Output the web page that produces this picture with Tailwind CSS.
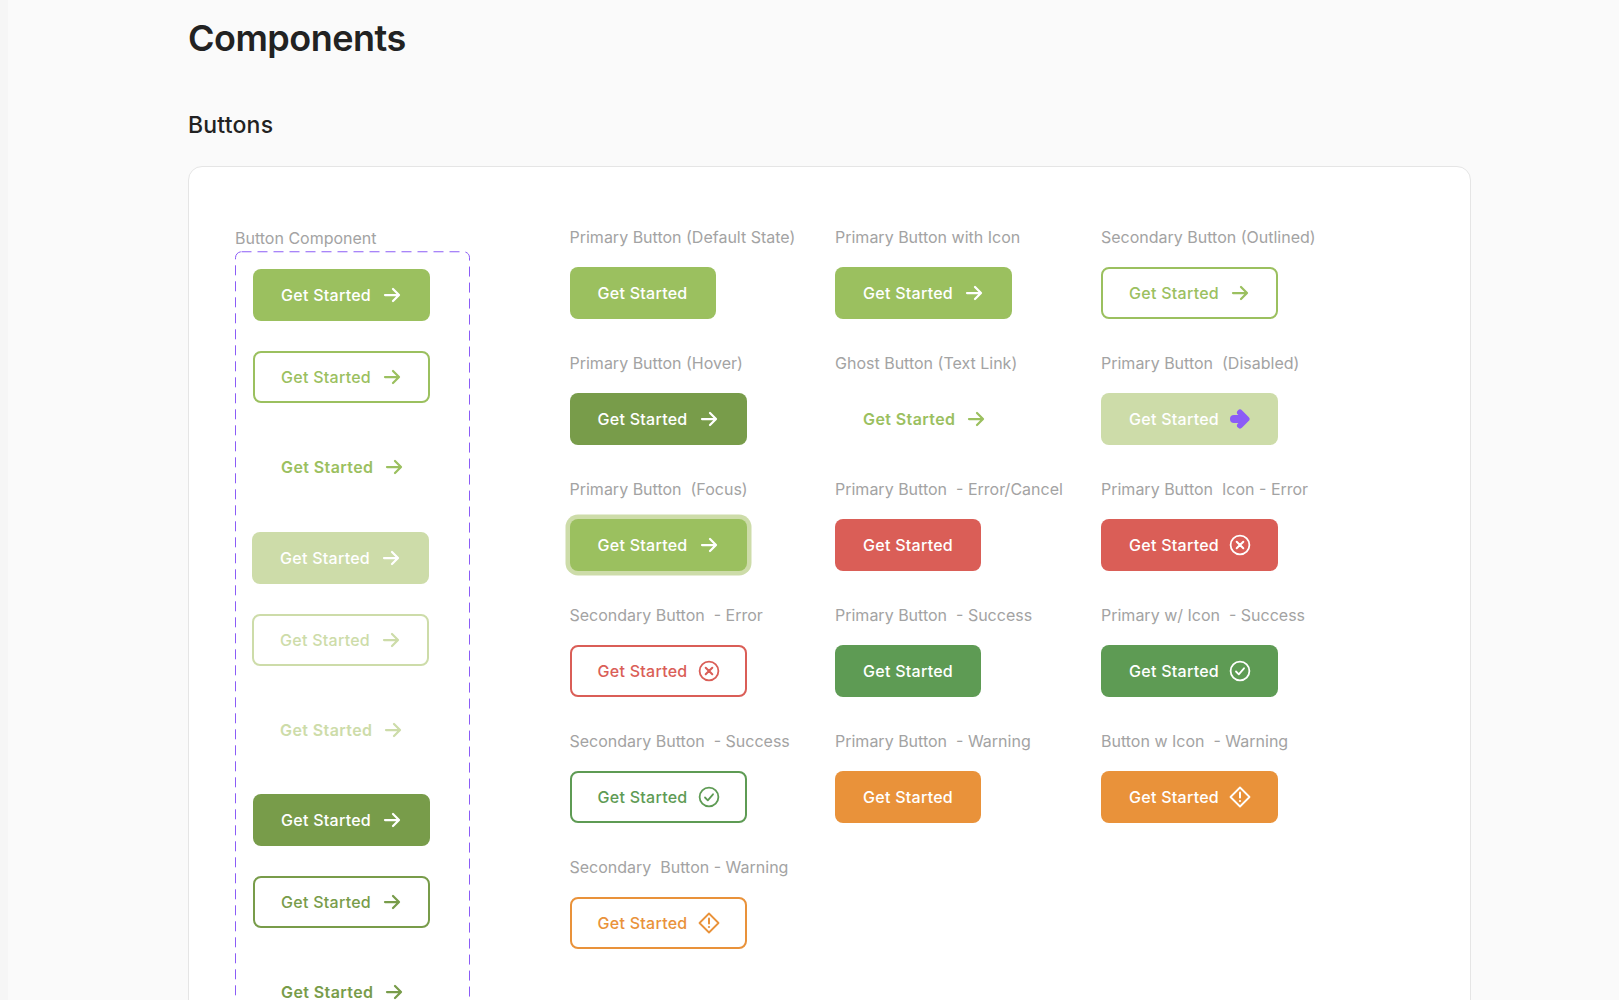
<!DOCTYPE html>
<html lang="en">
<head>
    <meta charset="UTF-8">
    <title>Components</title>
    <script src="https://cdn.jsdelivr.net/npm/@tailwindcss/browser@4"></script>
</head>
<body class="h-screen overflow-hidden bg-[#fafafa] flex font-[Inter,sans-serif]">
    <!-- Left edge -->
    <div class="w-2 h-full shrink-0 bg-[#f6f6f6]"></div>

    <main class="pl-[180px] w-full">
        <h1 class="pt-4 text-[36px] leading-[44px] font-semibold tracking-[-0.5px] text-[#222222]">Components</h1>
        <h2 class="mt-[51px] text-[23px] leading-[28px] font-medium tracking-[0.2px] text-[#222222]">Buttons</h2>

        <!-- Card -->
        <section class="mt-[27px] w-[1283px] h-[1100px] bg-white border border-[#e5e5e5] rounded-[14px] pl-[46px] pt-[59px] flex items-start">
            <!-- Button component column -->
            <div class="w-[235px] shrink-0">
                <p class="text-base leading-6 mb-px text-[#a3a3a3]">Button Component</p>
                <div class="relative w-[235px] h-[786px] pt-[18px] pl-[18px] flex flex-col items-start gap-[30px]">
                    <svg class="absolute top-0 left-0 w-[235px] h-[786px]" fill="none">
                        <rect x="0.5" y="0.75" width="234" height="785" rx="6" stroke="#8b5cf6" stroke-dasharray="10 6"/>
                    </svg>

                    <button class="h-[52px] inline-flex items-center gap-[11px] px-7 rounded-lg bg-[#9bc05f] text-white text-base font-medium tracking-[0.27px]">Get Started
                        <svg class="w-5 h-5 overflow-visible" viewBox="0 0 20 20" fill="none" stroke="currentColor" stroke-width="2.25" stroke-linecap="round" stroke-linejoin="round"><path d="M3 10h14M11 4l6 6-6 6"/></svg>
                    </button>
                    <button class="h-[52px] inline-flex items-center gap-[11px] px-[26px] rounded-lg border-2 border-[#9bc05f] text-[#9bc05f] text-base font-medium tracking-[0.27px]">Get Started
                        <svg class="w-5 h-5 overflow-visible" viewBox="0 0 20 20" fill="none" stroke="currentColor" stroke-width="2.25" stroke-linecap="round" stroke-linejoin="round"><path d="M3 10h14M11 4l6 6-6 6"/></svg>
                    </button>
                    <button class="mt-2 mb-[8.5px] h-[52px] inline-flex items-center gap-[11px] px-7 text-[#9bc05f] text-base font-semibold tracking-[0.4px]">Get Started
                        <svg class="w-5 h-5 overflow-visible" viewBox="0 0 20 20" fill="none" stroke="currentColor" stroke-width="2.25" stroke-linecap="round" stroke-linejoin="round"><path d="M3 10h14M11 4l6 6-6 6"/></svg>
                    </button>

                    <button class="-ml-px h-[52px] inline-flex items-center gap-[11px] px-7 rounded-lg bg-[#cddca9] text-white text-base font-medium tracking-[0.27px]">Get Started
                        <svg class="w-5 h-5 overflow-visible" viewBox="0 0 20 20" fill="none" stroke="currentColor" stroke-width="2.25" stroke-linecap="round" stroke-linejoin="round"><path d="M3 10h14M11 4l6 6-6 6"/></svg>
                    </button>
                    <button class="-ml-px h-[52px] inline-flex items-center gap-[11px] px-[26px] rounded-lg border-2 border-[#cddca9] text-[#cddca9] text-base font-medium tracking-[0.27px]">Get Started
                        <svg class="w-5 h-5 overflow-visible" viewBox="0 0 20 20" fill="none" stroke="currentColor" stroke-width="2.25" stroke-linecap="round" stroke-linejoin="round"><path d="M3 10h14M11 4l6 6-6 6"/></svg>
                    </button>
                    <button class="-ml-px mt-2 mb-[8.5px] h-[52px] inline-flex items-center gap-[11px] px-7 text-[#cddca9] text-base font-semibold tracking-[0.4px]">Get Started
                        <svg class="w-5 h-5 overflow-visible" viewBox="0 0 20 20" fill="none" stroke="currentColor" stroke-width="2.25" stroke-linecap="round" stroke-linejoin="round"><path d="M3 10h14M11 4l6 6-6 6"/></svg>
                    </button>

                    <button class="h-[52px] inline-flex items-center gap-[11px] px-7 rounded-lg bg-[#789c4a] text-white text-base font-medium tracking-[0.27px]">Get Started
                        <svg class="w-5 h-5 overflow-visible" viewBox="0 0 20 20" fill="none" stroke="currentColor" stroke-width="2.25" stroke-linecap="round" stroke-linejoin="round"><path d="M3 10h14M11 4l6 6-6 6"/></svg>
                    </button>
                    <button class="h-[52px] inline-flex items-center gap-[11px] px-[26px] rounded-lg border-2 border-[#789c4a] text-[#789c4a] text-base font-medium tracking-[0.27px]">Get Started
                        <svg class="w-5 h-5 overflow-visible" viewBox="0 0 20 20" fill="none" stroke="currentColor" stroke-width="2.25" stroke-linecap="round" stroke-linejoin="round"><path d="M3 10h14M11 4l6 6-6 6"/></svg>
                    </button>
                    <button class="mt-2 mb-[8.5px] h-[52px] inline-flex items-center gap-[11px] px-7 text-[#789c4a] text-base font-semibold tracking-[0.4px]">Get Started
                        <svg class="w-5 h-5 overflow-visible" viewBox="0 0 20 20" fill="none" stroke="currentColor" stroke-width="2.25" stroke-linecap="round" stroke-linejoin="round"><path d="M3 10h14M11 4l6 6-6 6"/></svg>
                    </button>
                </div>
            </div>

            <!-- Variants grid -->
            <div class="ml-[99.5px] -mt-px grid grid-cols-[265.5px_266px_266px] gap-y-8 text-base leading-6 text-[#a3a3a3]">
                <!-- Row 1 -->
                <div class="flex flex-col items-start gap-[18px]">
                    <p class="whitespace-pre">Primary Button (Default State)</p>
                    <button class="h-[52px] inline-flex items-center px-7 rounded-lg bg-[#9bc05f] text-white font-medium tracking-[0.27px]">Get Started</button>
                </div>
                <div class="flex flex-col items-start gap-[18px]">
                    <p class="whitespace-pre">Primary Button with Icon</p>
                    <button class="h-[52px] inline-flex items-center gap-[11px] px-7 rounded-lg bg-[#9bc05f] text-white font-medium tracking-[0.27px]">Get Started
                        <svg class="w-5 h-5 overflow-visible" viewBox="0 0 20 20" fill="none" stroke="currentColor" stroke-width="2.25" stroke-linecap="round" stroke-linejoin="round"><path d="M3 10h14M11 4l6 6-6 6"/></svg>
                    </button>
                </div>
                <div class="flex flex-col items-start gap-[18px]">
                    <p class="whitespace-pre">Secondary Button (Outlined)</p>
                    <button class="h-[52px] inline-flex items-center gap-[11px] px-[26px] rounded-lg border-2 border-[#9bc05f] text-[#9bc05f] font-medium tracking-[0.27px]">Get Started
                        <svg class="w-5 h-5 overflow-visible" viewBox="0 0 20 20" fill="none" stroke="currentColor" stroke-width="2.25" stroke-linecap="round" stroke-linejoin="round"><path d="M3 10h14M11 4l6 6-6 6"/></svg>
                    </button>
                </div>

                <!-- Row 2 -->
                <div class="flex flex-col items-start gap-[18px]">
                    <p class="whitespace-pre">Primary Button (Hover)</p>
                    <button class="h-[52px] inline-flex items-center gap-[11px] px-7 rounded-lg bg-[#789c4a] text-white font-medium tracking-[0.27px]">Get Started
                        <svg class="w-5 h-5 overflow-visible" viewBox="0 0 20 20" fill="none" stroke="currentColor" stroke-width="2.25" stroke-linecap="round" stroke-linejoin="round"><path d="M3 10h14M11 4l6 6-6 6"/></svg>
                    </button>
                </div>
                <div class="flex flex-col items-start gap-[18px]">
                    <p class="whitespace-pre">Ghost Button (Text Link)</p>
                    <button class="h-[52px] inline-flex items-center gap-[11px] px-7 text-[#9bc05f] font-semibold tracking-[0.4px]">Get Started
                        <svg class="w-5 h-5 overflow-visible" viewBox="0 0 20 20" fill="none" stroke="currentColor" stroke-width="2.25" stroke-linecap="round" stroke-linejoin="round"><path d="M3 10h14M11 4l6 6-6 6"/></svg>
                    </button>
                </div>
                <div class="flex flex-col items-start gap-[18px]">
                    <p class="whitespace-pre">Primary Button  (Disabled)</p>
                    <button class="h-[52px] inline-flex items-center gap-[11px] px-7 rounded-lg bg-[#cddca9] text-white font-medium tracking-[0.27px]">Get Started
                        <svg class="w-5 h-5 overflow-visible text-[#8b5cf6]" viewBox="0 0 20 20" fill="none" stroke="currentColor" stroke-linecap="round" stroke-linejoin="round"><path stroke-width="8" d="M4 10h9"/><path stroke-width="6" d="M10 3.5l6.5 6.5-6.5 6.5"/></svg>
                    </button>
                </div>

                <!-- Row 3 -->
                <div class="flex flex-col items-start gap-[18px]">
                    <p class="whitespace-pre">Primary Button  (Focus)</p>
                    <button class="h-[52px] inline-flex items-center gap-[11px] px-7 rounded-lg bg-[#9bc05f] ring-[4.5px] ring-[#cddca9] text-white font-medium tracking-[0.27px]">Get Started
                        <svg class="w-5 h-5 overflow-visible" viewBox="0 0 20 20" fill="none" stroke="currentColor" stroke-width="2.25" stroke-linecap="round" stroke-linejoin="round"><path d="M3 10h14M11 4l6 6-6 6"/></svg>
                    </button>
                </div>
                <div class="flex flex-col items-start gap-[18px]">
                    <p class="whitespace-pre">Primary Button  - Error/Cancel</p>
                    <button class="h-[52px] inline-flex items-center px-7 rounded-lg bg-[#da5e57] text-white font-medium tracking-[0.27px]">Get Started</button>
                </div>
                <div class="flex flex-col items-start gap-[18px]">
                    <p class="whitespace-pre">Primary Button  Icon - Error</p>
                    <button class="h-[52px] inline-flex items-center gap-[11px] px-7 rounded-lg bg-[#da5e57] text-white font-medium tracking-[0.27px]">Get Started
                        <svg class="w-5 h-5 overflow-visible" viewBox="0 0 20 20" fill="none" stroke="currentColor" stroke-width="1.8" stroke-linecap="round" stroke-linejoin="round"><circle cx="10" cy="10" r="9.4"/><path stroke-width="2" d="M6.7 6.7l6.6 6.6M13.3 6.7l-6.6 6.6"/></svg>
                    </button>
                </div>

                <!-- Row 4 -->
                <div class="flex flex-col items-start gap-[18px]">
                    <p class="whitespace-pre">Secondary Button  - Error</p>
                    <button class="h-[52px] inline-flex items-center gap-[11px] px-[26px] rounded-lg border-2 border-[#da5e57] text-[#da5e57] font-medium tracking-[0.27px]">Get Started
                        <svg class="w-5 h-5 overflow-visible" viewBox="0 0 20 20" fill="none" stroke="currentColor" stroke-width="1.8" stroke-linecap="round" stroke-linejoin="round"><circle cx="10" cy="10" r="9.4"/><path stroke-width="2" d="M6.7 6.7l6.6 6.6M13.3 6.7l-6.6 6.6"/></svg>
                    </button>
                </div>
                <div class="flex flex-col items-start gap-[18px]">
                    <p class="whitespace-pre">Primary Button  - Success</p>
                    <button class="h-[52px] inline-flex items-center px-7 rounded-lg bg-[#5e9b54] text-white font-medium tracking-[0.27px]">Get Started</button>
                </div>
                <div class="flex flex-col items-start gap-[18px]">
                    <p class="whitespace-pre">Primary w/ Icon  - Success</p>
                    <button class="h-[52px] inline-flex items-center gap-[11px] px-7 rounded-lg bg-[#5e9b54] text-white font-medium tracking-[0.27px]">Get Started
                        <svg class="w-5 h-5 overflow-visible" viewBox="0 0 20 20" fill="none" stroke="currentColor" stroke-width="1.8" stroke-linecap="round" stroke-linejoin="round"><circle cx="10" cy="10" r="9.4"/><path d="M6 10.5l2.8 2.8 5.2-6"/></svg>
                    </button>
                </div>

                <!-- Row 5 -->
                <div class="flex flex-col items-start gap-[18px]">
                    <p class="whitespace-pre">Secondary Button  - Success</p>
                    <button class="h-[52px] inline-flex items-center gap-[11px] px-[26px] rounded-lg border-2 border-[#5e9b54] text-[#5e9b54] font-medium tracking-[0.27px]">Get Started
                        <svg class="w-5 h-5 overflow-visible" viewBox="0 0 20 20" fill="none" stroke="currentColor" stroke-width="1.8" stroke-linecap="round" stroke-linejoin="round"><circle cx="10" cy="10" r="9.4"/><path d="M6 10.5l2.8 2.8 5.2-6"/></svg>
                    </button>
                </div>
                <div class="flex flex-col items-start gap-[18px]">
                    <p class="whitespace-pre">Primary Button  - Warning</p>
                    <button class="h-[52px] inline-flex items-center px-7 rounded-lg bg-[#e9923a] text-white font-medium tracking-[0.27px]">Get Started</button>
                </div>
                <div class="flex flex-col items-start gap-[18px]">
                    <p class="whitespace-pre">Button w Icon  - Warning</p>
                    <button class="h-[52px] inline-flex items-center gap-[11px] px-7 rounded-lg bg-[#e9923a] text-white font-medium tracking-[0.27px]">Get Started
                        <svg class="w-5 h-5 overflow-visible" viewBox="0 0 20 20" fill="none" stroke="currentColor" stroke-width="1.8" stroke-linecap="round" stroke-linejoin="round"><path d="M10 .5L19.5 10 10 19.5 .5 10z"/><path stroke-width="2" d="M10 5.5v5"/><path stroke-width="2.2" d="M10 14h.01"/></svg>
                    </button>
                </div>

                <!-- Row 6 -->
                <div class="flex flex-col items-start gap-[18px]">
                    <p class="whitespace-pre">Secondary  Button - Warning</p>
                    <button class="h-[52px] inline-flex items-center gap-[11px] px-[26px] rounded-lg border-2 border-[#e9923a] text-[#e9923a] font-medium tracking-[0.27px]">Get Started
                        <svg class="w-5 h-5 overflow-visible" viewBox="0 0 20 20" fill="none" stroke="currentColor" stroke-width="1.8" stroke-linecap="round" stroke-linejoin="round"><path d="M10 .5L19.5 10 10 19.5 .5 10z"/><path stroke-width="2" d="M10 5.5v5"/><path stroke-width="2.2" d="M10 14h.01"/></svg>
                    </button>
                </div>
            </div>
        </section>
    </main>
</body>
</html>
